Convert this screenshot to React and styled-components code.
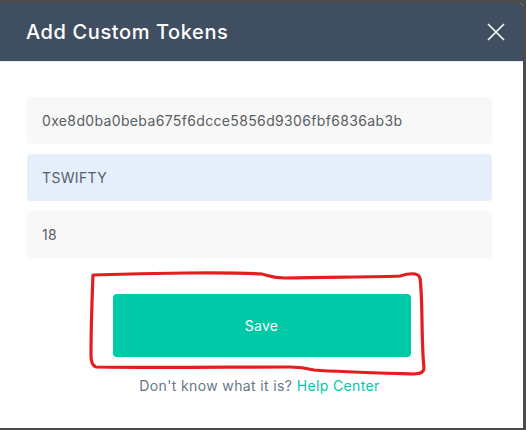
import React from 'react';
import styled, { createGlobalStyle } from 'styled-components';

const GlobalStyle = createGlobalStyle`
  body {
    margin: 0;
    background: #4b4b4b;
    font-family: Inter, "Noto Sans", sans-serif;
  }
`;

const Backdrop = styled.div`
  width: 526px;
  height: 430px;
  padding-top: 3px;
  box-sizing: border-box;
  background: #4b4b4b;
  overflow: hidden;
`;

const Modal = styled.div`
  position: relative;
  width: 523px;
  height: 425px;
  background: #ffffff;
  border-top-right-radius: 4px;
  overflow: hidden;
`;

const Header = styled.div`
  height: 58px;
  display: flex;
  align-items: center;
  justify-content: space-between;
  padding: 0 17px 0 26px;
  background: #404e61;
  border-bottom: 1px solid #e7eaf3;
`;

const Title = styled.h2`
  margin: 0;
  color: #ffffff;
  font-size: 20px;
  font-weight: 500;
  letter-spacing: 0.6px;
`;

const CloseButton = styled.button`
  display: flex;
  padding: 0;
  border: 0;
  background: none;
  cursor: pointer;
`;

const Body = styled.div`
  display: flex;
  flex-direction: column;
  padding: 35px 31px 0 27px;
`;

const Fields = styled.div`
  display: flex;
  flex-direction: column;
  gap: 10px;
`;

const Field = styled.input`
  height: 47px;
  box-sizing: border-box;
  padding: 0 15px;
  border: 0;
  border-radius: 4px;
  outline: none;
  background: ${(p) => (p.$filled ? '#e5effc' : '#f8f8f8')};
  color: #585d63;
  font-family: inherit;
  font-size: 14px;
  letter-spacing: 0.35px;
`;

const SaveButton = styled.button`
  align-self: center;
  width: 298px;
  height: 63px;
  margin: 36px 0 0 4px;
  border: 0;
  border-radius: 4px;
  background: #00c9a7;
  color: #ffffff;
  font-family: inherit;
  font-size: 14px;
  font-weight: 400;
  letter-spacing: 0.3px;
  cursor: pointer;
`;

const Help = styled.p`
  margin: 20px 0 0;
  text-align: center;
  color: #677788;
  font-size: 14px;
  letter-spacing: 0.37px;
  a {
    color: #00c9a7;
    text-decoration: none;
  }
`;

const Annotation = styled.svg`
  position: absolute;
  left: 0;
  top: 0;
  pointer-events: none;
`;

export default function App() {
  return (
    <>
      <GlobalStyle />
      <Backdrop>
        <Modal>
          <Header>
            <Title>Add Custom Tokens</Title>
            <CloseButton aria-label='Close'>
              <svg width='20' height='20' viewBox='0 0 20 20'>
                <path d='M2 2 L18 18 M18 2 L2 18' stroke='#ffffff' strokeWidth='1.6' />
              </svg>
            </CloseButton>
          </Header>
          <Body>
            <Fields>
              <Field defaultValue='0xe8d0ba0beba675f6dcce5856d9306fbf6836ab3b' />
              <Field $filled defaultValue='TSWIFTY' />
              <Field defaultValue='18' />
            </Fields>
            <SaveButton>Save</SaveButton>
            <Help>
              Don't know what it is? <a href='#'>Help Center</a>
            </Help>
          </Body>
          <Annotation width='523' height='425' viewBox='0 3 523 425'>
            <path
              d='M93 275 C150 273 230 272 262 274 C270 276 272 278 285 278 C330 277 380 277 400 276 C410 273 418 272 420 278 C423 300 421 340 424 368 C424 373 420 374 414 374 C380 373 340 372 314 370 C306 368 300 367 290 367 C230 367 150 368 96 367 C92 366 91 362 91 355 C91 330 92 300 93 275 Z'
              fill='none'
              stroke='#e41e1e'
              strokeWidth='3.2'
              strokeLinejoin='round'
            />
          </Annotation>
        </Modal>
      </Backdrop>
    </>
  );
}
